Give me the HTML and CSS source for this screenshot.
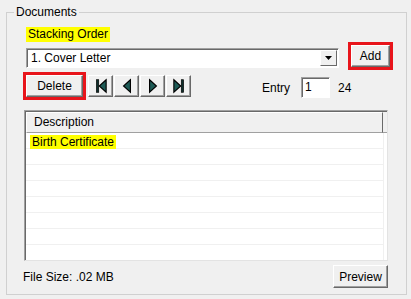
FILE: index.html
```html
<!DOCTYPE html>
<html lang="en">
<head>
	<meta charset="UTF-8">
	<title>Documents</title>
	<link rel="stylesheet" href="styles.css">
</head>
<body>
	<fieldset class="group">
		<legend>Documents</legend>
		<div class="label-row"><span class="hl">Stacking Order</span></div>
		<div class="combo-row">
			<div class="combo">
				<span class="combo-text">1. Cover Letter</span>
				<span class="combo-btn"><svg width="7" height="4" viewBox="0 0 7 4"><polygon points="0,0 7,0 3.5,4" fill="#000"/></svg></span>
			</div>
			<div class="mark mark-add"><button class="btn btn-add">Add</button></div>
		</div>
		<div class="nav-row">
			<div class="mark mark-delete"><button class="btn btn-delete">Delete</button></div>
			<div class="nav">
				<button class="btn nav-btn"><svg width="16" height="16" viewBox="0 0 14 14"><rect x="3" y="1.5" width="2" height="11" fill="#0d2e2b" stroke="#000" stroke-width="0.6"/><polygon points="11.5,1.5 5.5,7 11.5,12.5" fill="#1d5a55" stroke="#000" stroke-width="1"/></svg></button>
				<button class="btn nav-btn"><svg width="16" height="16" viewBox="0 0 14 14"><polygon points="10,1.5 4,7 10,12.5" fill="#1d5a55" stroke="#000" stroke-width="1"/></svg></button>
				<button class="btn nav-btn"><svg width="16" height="16" viewBox="0 0 14 14"><polygon points="4,1.5 10,7 4,12.5" fill="#1d5a55" stroke="#000" stroke-width="1"/></svg></button>
				<button class="btn nav-btn"><svg width="16" height="16" viewBox="0 0 14 14"><polygon points="2.5,1.5 8.5,7 2.5,12.5" fill="#1d5a55" stroke="#000" stroke-width="1"/><rect x="9" y="1.5" width="2" height="11" fill="#0d2e2b" stroke="#000" stroke-width="0.6"/></svg></button>
			</div>
			<div class="entry">
				<span class="entry-label">Entry</span>
				<span class="entry-input">1</span>
				<span class="entry-total">24</span>
			</div>
		</div>
		<div class="list">
			<div class="list-head">
				<span class="col">Description</span>
				<span class="col-rest"></span>
			</div>
			<div class="row"><span class="hl">Birth Certificate</span></div>
			<div class="row"></div>
			<div class="row"></div>
			<div class="row"></div>
			<div class="row"></div>
			<div class="row"></div>
			<div class="row"></div>
			<div class="row"></div>
		</div>
		<div class="footer">
			<span class="size">File Size: .02 MB</span>
			<button class="btn btn-preview">Preview</button>
		</div>
	</fieldset>
</body>
</html>
```

FILE: styles.css
```css
* {
	margin: 0;
	padding: 0;
	box-sizing: border-box;
}
body {
	font-family: "Liberation Sans", Arial, sans-serif;
	font-size: 12px;
	color: #000;
	background: #f0f0f0;
	padding: 5px 0 0 6px;
}
.group {
	width: 401px;
	height: 290px;
	border: 1px solid #d0d0d0;
	padding: 0 0 0 16px;
}
.group legend {
	margin-left: -9px;
	padding: 0 2px;
	line-height: 15px;
}
.hl {
	display: inline-block;
	background: #ffff00;
	line-height: 15px;
	padding: 0 2px;
}
.label-row {
	margin: 7px 0 0 3px;
	height: 15px;
}
.combo-row {
	display: flex;
	align-items: flex-start;
}
.combo {
	display: flex;
	align-items: center;
	width: 313px;
	height: 20px;
	margin: 6px 0 0 3px;
	background: #fff;
	border: 1px solid;
	border-color: #a0a0a0 #fff #fff #a0a0a0;
	box-shadow: inset 1px 1px #696969;
}
.combo-text {
	flex: 1;
	padding-left: 4px;
	line-height: 16px;
}
.combo-btn {
	display: flex;
	align-items: center;
	justify-content: center;
	width: 17px;
	height: 16px;
	margin-right: 1px;
	background: #f0f0f0;
	border: 1px solid;
	border-color: #fff #696969 #696969 #fff;
}
.mark {
	border: 3px solid #e8151b;
}
.mark-add {
	margin-left: 9px;
}
.btn {
	font-family: inherit;
	font-size: 12px;
	color: #000;
	background: #f0f0f0;
	border: 1px solid;
	border-color: #fff #696969 #696969 #fff;
	box-shadow: inset -1px -1px #a0a0a0;
	height: 22px;
	display: flex;
	align-items: center;
	justify-content: center;
}
.btn-add {
	width: 39px;
}
.nav-row {
	display: flex;
	align-items: flex-start;
	margin-top: 2px;
}
.btn-delete {
	width: 57px;
}
.nav {
	display: flex;
	gap: 1px;
	margin: 3px 0 0 2px;
}
.nav-btn {
	width: 25px;
}
.entry {
	display: flex;
	align-items: center;
	height: 21px;
	margin: 5px 0 0 71px;
}
.entry-input {
	width: 29px;
	height: 21px;
	margin-left: 11px;
	padding-left: 3px;
	background: #fff;
	line-height: 19px;
	border: 1px solid;
	border-color: #a0a0a0 #fff #fff #a0a0a0;
	box-shadow: inset 1px 1px #696969;
}
.entry-total {
	margin-left: 8px;
}
.list {
	width: 364px;
	height: 151px;
	margin: 10px 0 0 1px;
	background: #fff;
	border: 1px solid;
	border-color: #a0a0a0 #e3e3e3 #e3e3e3 #a0a0a0;
	box-shadow: inset 1px 1px #696969;
	overflow: hidden;
	padding: 1px 0 0 1px;
}
.list-head {
	display: flex;
	height: 21px;
	background: #f0f0f0;
}
.col {
	width: 357px;
	padding-left: 7px;
	line-height: 19px;
	border: 1px solid;
	border-color: #fff #696969 #a0a0a0 #fff;
}
.col-rest {
	flex: 1;
	border-bottom: 1px solid #a0a0a0;
}
.row {
	height: 16px;
	width: 358px;
	border-bottom: 1px solid #f0f0f0;
	border-right: 1px solid #f0f0f0;
	padding: 2px 0 0 4px;
}
.row .hl {
	line-height: 14px;
	vertical-align: top;
}
.footer {
	display: flex;
	justify-content: space-between;
	align-items: center;
	width: 365px;
	margin-top: 4px;
}
.btn-preview {
	width: 55px;
	height: 23px;
}
```
